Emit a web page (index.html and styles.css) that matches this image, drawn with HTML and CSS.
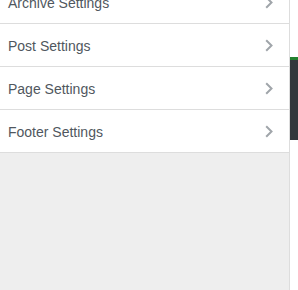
FILE: index.html
```html
<!DOCTYPE html>
<html>
<head>
<meta charset="utf-8">
<link rel="stylesheet" href="styles.css">
</head>
<body>
<div class="layout">
  <div class="panel">
    <ul class="sections">
      <li class="section"><span class="title">Archive Settings</span><svg class="chev" width="8" height="13" viewBox="0 0 8 13"><polyline points="1.2,1.2 6.5,6.5 1.2,11.8"/></svg></li>
      <li class="section"><span class="title">Post Settings</span><svg class="chev" width="8" height="13" viewBox="0 0 8 13"><polyline points="1.2,1.2 6.5,6.5 1.2,11.8"/></svg></li>
      <li class="section"><span class="title">Page Settings</span><svg class="chev" width="8" height="13" viewBox="0 0 8 13"><polyline points="1.2,1.2 6.5,6.5 1.2,11.8"/></svg></li>
      <li class="section"><span class="title">Footer Settings</span><svg class="chev" width="8" height="13" viewBox="0 0 8 13"><polyline points="1.2,1.2 6.5,6.5 1.2,11.8"/></svg></li>
    </ul>
  </div>
  <div class="preview">
    <div class="darkbar"></div>
  </div>
</div>
</body>
</html>
```
FILE: styles.css
```css
html, body {
  margin: 0;
  padding: 0;
  background: #fff;
  overflow: hidden;
}
.layout {
  display: flex;
  height: 290px;
}
.panel {
  width: 289px;
  flex: none;
  background: #eee;
  border-right: 1px solid #ddd;
  overflow: hidden;
}
.sections {
  list-style: none;
  margin: -19px 0 0 0;
  padding: 0;
}
.section {
  display: flex;
  align-items: center;
  justify-content: space-between;
  background: #fff;
  border-bottom: 1px solid #ddd;
  padding: 12px 16px 9px 8px;
  font-family: "Liberation Sans", Arial, sans-serif;
  font-size: 14px;
  line-height: 21px;
  color: #50575e;
}
.chev {
  display: block;
  margin-top: -2px;
}
.chev polyline {
  fill: none;
  stroke: #a0a5aa;
  stroke-width: 2;
}
.preview {
  flex: 1;
}
.darkbar {
  margin-top: 57px;
  height: 80px;
  border-top: 3px solid #23802f;
  background: #32373c;
}
```
